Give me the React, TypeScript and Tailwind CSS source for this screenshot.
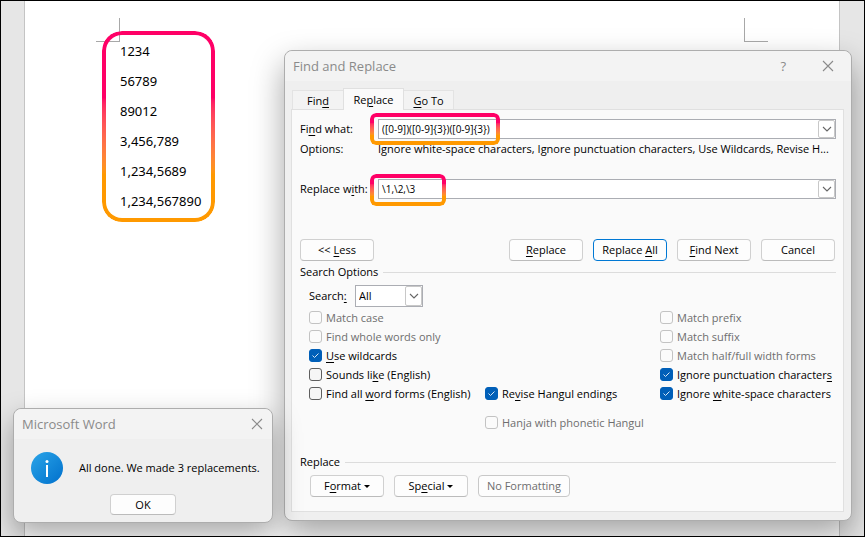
import { useId, useState, type ReactNode } from "react";

function Key({ children }: { children: ReactNode }) {
  return <span className="underline decoration-1 underline-offset-2">{children}</span>;
}

function Cross() {
  return (
    <svg width="12" height="12" viewBox="0 0 12 12" fill="none" stroke="#8a8a8a" strokeWidth="1.1">
      <path d="M1 1l10 10M11 1L1 11" />
    </svg>
  );
}

function Chevron() {
  return (
    <svg width="10" height="6" viewBox="0 0 10 6" fill="none" stroke="#666" strokeWidth="1.1">
      <path d="M1 1l4 4 4-4" />
    </svg>
  );
}

function Highlight({ className }: { className: string }) {
  return (
    <div
      aria-hidden="true"
      className={`pointer-events-none absolute bg-linear-to-b from-[#ff0066] to-[#ff9900] p-1 [mask:linear-gradient(#000_0_0)_content-box_exclude,linear-gradient(#000_0_0)] ${className}`}
    />
  );
}

function Check({ children, checked = false, disabled = false, className = "" }: {
  children: ReactNode;
  checked?: boolean;
  disabled?: boolean;
  className?: string;
}) {
  const [on, setOn] = useState(checked);
  return (
    <label className={`flex h-[19px] items-center gap-1 whitespace-nowrap ${disabled ? "text-[#6e6e6e]" : "text-black"} ${className}`}>
      <span className="grid size-[13px] shrink-0">
        <input
          type="checkbox"
          checked={on}
          disabled={disabled}
          onChange={() => setOn(!on)}
          className="col-start-1 row-start-1 size-[13px] appearance-none rounded-[3px] border border-[#5f5f5f] bg-[#f6f6f6] checked:border-[#005fb8] checked:bg-[#005fb8] disabled:border-[#c3c3c3] disabled:bg-[#fbfbfb]"
        />
        {on && (
          <svg className="pointer-events-none col-start-1 row-start-1" width="13" height="13" viewBox="0 0 13 13" fill="none" stroke="#d5e5f4" strokeWidth="1">
            <path d="M3.5 6.5l2 2 4-4" />
          </svg>
        )}
      </span>
      <span>{children}</span>
    </label>
  );
}

function Combo({ label, name, value, highlight }: { label: ReactNode; name: string; value: string; highlight: string }) {
  const id = useId();
  return (
    <div className="flex h-5 items-center">
      <label htmlFor={id} className="w-[78px] shrink-0 whitespace-nowrap">{label}</label>
      <div className="relative flex h-5 min-w-0 flex-1 border border-[#abadb3] bg-white">
        <input id={id} defaultValue={value} className="min-w-0 flex-1 bg-transparent px-[3px] text-[10px] outline-none" />
        <button type="button" aria-label={`${name} history`} className="flex w-[17px] items-center justify-center rounded-xs border border-[#c8c8c8] bg-white">
          <Chevron />
        </button>
        <Highlight className={highlight} />
      </div>
    </div>
  );
}

function Button({ children, className = "h-[22px] w-[74px] border-[#d0d0d0] border-b-[#bbbbbb]" }: { children: ReactNode; className?: string }) {
  return (
    <button type="button" className={`flex items-center justify-center whitespace-nowrap rounded-sm border bg-[#fdfdfd] ${className}`}>
      {children}
    </button>
  );
}

function Heading({ children }: { children: ReactNode }) {
  return (
    <div className="flex h-[22px] items-center gap-[5px]">
      <h2>{children}</h2>
      <div className="h-px flex-1 bg-[#dcdcdc]" />
    </div>
  );
}

function Caret() {
  return (
    <svg width="6" height="3" viewBox="0 0 6 3" fill="#000">
      <path d="M0 0h6L3 3z" />
    </svg>
  );
}

const lines = ["1234", "56789", "89012", "3,456,789", "1,234,5689", "1,234,567890"];

export default function App() {
  const searchId = useId();
  return (
    <div className="relative min-h-screen overflow-hidden border border-black bg-[#e6e6e6] pr-6 pl-[23px] font-['Open_Sans','Noto_Sans',sans-serif] text-[11px] leading-4 text-black">
      <main className="min-h-[535px] border-x border-[#c4c4c4] bg-white pt-[35px] pl-[95px]">
        <div className="relative w-fit font-['Noto_Sans',sans-serif] text-[13px] leading-[30px]">
          {lines.map((line) => (
            <p key={line}>{line}</p>
          ))}
          <div className="absolute -top-[18px] -left-6 size-6 border-r border-b border-[#a8a8a8]" />
          <Highlight className="-top-[5px] -right-[14px] -bottom-[6px] -left-[18px] rounded-[20px] from-35% to-75%" />
        </div>
        <div className="absolute top-[17px] right-24 size-6 border-b border-l border-[#a8a8a8]" />
      </main>

      <section aria-label="Find and Replace" className="absolute top-[49px] right-3 left-[283px] rounded-lg border border-[#adadad] bg-[#efefef] pb-2 shadow-[0_14px_32px_rgba(0,0,0,0.36)]">
        <header className="flex h-[30px] items-center rounded-t-lg bg-[#f3f3f3] pr-[17px] pl-2 text-[#8a8a8a]">
          <h1 className="flex-1 text-[13px]">Find and Replace</h1>
          <button type="button" aria-label="Help" className="mr-9 text-[13px]">?</button>
          <button type="button" aria-label="Close"><Cross /></button>
        </header>

        <div className="pt-[7px] pr-[7px] pl-[6px]">
          <div role="tablist" className="flex h-[21px] items-end pl-px">
            <button type="button" role="tab" aria-selected="false" className="h-[19px] w-[51px] border-t border-l border-[#e3e3e3] bg-[#f3f3f3] pt-px">Fin<Key>d</Key></button>
            <button type="button" role="tab" aria-selected="true" className="relative -mb-px h-[22px] w-[61px] border border-b-0 border-[#e0e0e0] bg-[#fafafa]">Re<Key>p</Key>lace</button>
            <button type="button" role="tab" aria-selected="false" className="h-[19px] w-[50px] border-t border-r border-[#e3e3e3] bg-[#f3f3f3] pt-px"><Key>G</Key>o To</button>
          </div>

          <div role="tabpanel" className="border border-[#e0e0e0] bg-[#fafafa] pt-[9px] pr-[7px] pb-[14px] pl-2">
            <Combo label={<>Fi<Key>n</Key>d what:</>} name="Find what" value="([0-9])([0-9]{3})([0-9]{3})" highlight="-top-[7px] -left-[9px] h-8 w-[130px] rounded-md from-30% to-70%" />
            <div className="flex h-5 items-center">
              <span className="w-[78px] shrink-0">Options:</span>
              <span className="whitespace-nowrap">Ignore white-space characters, Ignore punctuation characters, Use Wildcards, Revise H...</span>
            </div>
            <div className="mt-5">
              <Combo label={<>Replace w<Key>i</Key>th:</>} name="Replace with" value="\1,\2,\3" highlight="-top-[6px] -left-[9px] h-8 w-[76px] rounded-md from-30% to-70%" />
            </div>

            <div className="mt-10 flex gap-[10px] pr-px">
              <Button>&lt;&lt;&nbsp;<Key>L</Key>ess</Button>
              <div className="flex-1" />
              <Button><Key>R</Key>eplace</Button>
              <Button className="h-[22px] w-[74px] border-[#0078d4]">Replace&nbsp;<Key>A</Key>ll</Button>
              <Button><Key>F</Key>ind Next</Button>
              <Button>Cancel</Button>
            </div>

            <Heading>Search Options</Heading>
            <div className="mt-[2px] flex h-[22px] items-center pl-[9px]">
              <label htmlFor={searchId} className="w-[46px]">Search<Key>:</Key></label>
              <div className="grid h-[22px] w-[68px] items-center border border-[#abadb3] bg-white">
                <select id={searchId} className="col-start-1 row-start-1 h-5 w-full appearance-none bg-transparent pl-[3px]">
                  <option>All</option>
                </select>
                <span className="pointer-events-none col-start-1 row-start-1 flex h-5 w-[17px] items-center justify-center justify-self-end rounded-xs border border-[#c8c8c8]">
                  <Chevron />
                </span>
              </div>
            </div>

            <div className="mt-px grid grid-cols-[176px_175px_1fr] pl-[9px]">
              <div>
                <Check disabled>Match case</Check>
                <Check disabled>Find whole words only</Check>
                <Check checked><Key>U</Key>se wildcards</Check>
                <Check>Sounds li<Key>k</Key>e (English)</Check>
                <Check>Find all <Key>w</Key>ord forms (English)</Check>
              </div>
              <div className="pt-[76px]">
                <Check checked>Re<Key>v</Key>ise Hangul endings</Check>
                <Check disabled className="mt-[10px]">Hanja with phonetic Hangul</Check>
              </div>
              <div>
                <Check disabled>Match prefix</Check>
                <Check disabled>Match suffix</Check>
                <Check disabled>Match half/full width forms</Check>
                <Check checked>Ignore punctuation character<Key>s</Key></Check>
                <Check checked>Ignore <Key>w</Key>hite-space characters</Check>
              </div>
            </div>

            <div className="mt-[19px]">
              <Heading>Replace</Heading>
            </div>
            <div className="mt-[2px] flex gap-[10px] pl-[10px]">
              <Button className="h-[22px] w-[74px] gap-[3px] border-[#d0d0d0] border-b-[#bbbbbb]"><span>F<Key>o</Key>rmat</span><Caret /></Button>
              <Button className="h-[22px] w-[74px] gap-[3px] border-[#d0d0d0] border-b-[#bbbbbb]"><span>Sp<Key>e</Key>cial</span><Caret /></Button>
              <Button className="h-[22px] w-[92px] border-[#c8c8c8] text-[#6e6e6e]">No Formatting</Button>
            </div>
          </div>
        </div>
      </section>

      <section aria-label="Microsoft Word" className="absolute top-[407px] left-3 w-[260px] rounded-lg border border-[#adadad] bg-[#efefef] pb-[7px] shadow-[0_12px_28px_rgba(0,0,0,0.34)]">
        <header className="flex h-[30px] items-center rounded-t-lg bg-[#f3f3f3] pr-[9px] pl-2 text-[#8a8a8a]">
          <h1 className="flex-1 text-[13px]">Microsoft Word</h1>
          <button type="button" aria-label="Close"><Cross /></button>
        </header>
        <div className="flex items-center gap-4 pt-[13px] pl-[17px]">
          <svg width="32" height="32" viewBox="0 0 32 32">
            <defs>
              <linearGradient id="info" x1="0" y1="0" x2="1" y2="1">
                <stop offset="0" stopColor="#2ba5e8" />
                <stop offset="1" stopColor="#0070cc" />
              </linearGradient>
            </defs>
            <circle cx="16" cy="16" r="16" fill="url(#info)" />
            <circle cx="16" cy="9.500" r="1.500" fill="#fff" />
            <path d="M16 13v12" stroke="#fff" strokeWidth="2" />
          </svg>
          <p className="whitespace-nowrap">All done. We made 3 replacements.</p>
        </div>
        <div className="mt-[10px] flex pl-24">
          <Button className="h-[21px] w-[66px] border-[#d0d0d0] border-b-[#bbbbbb]">OK</Button>
        </div>
      </section>
    </div>
  );
}
